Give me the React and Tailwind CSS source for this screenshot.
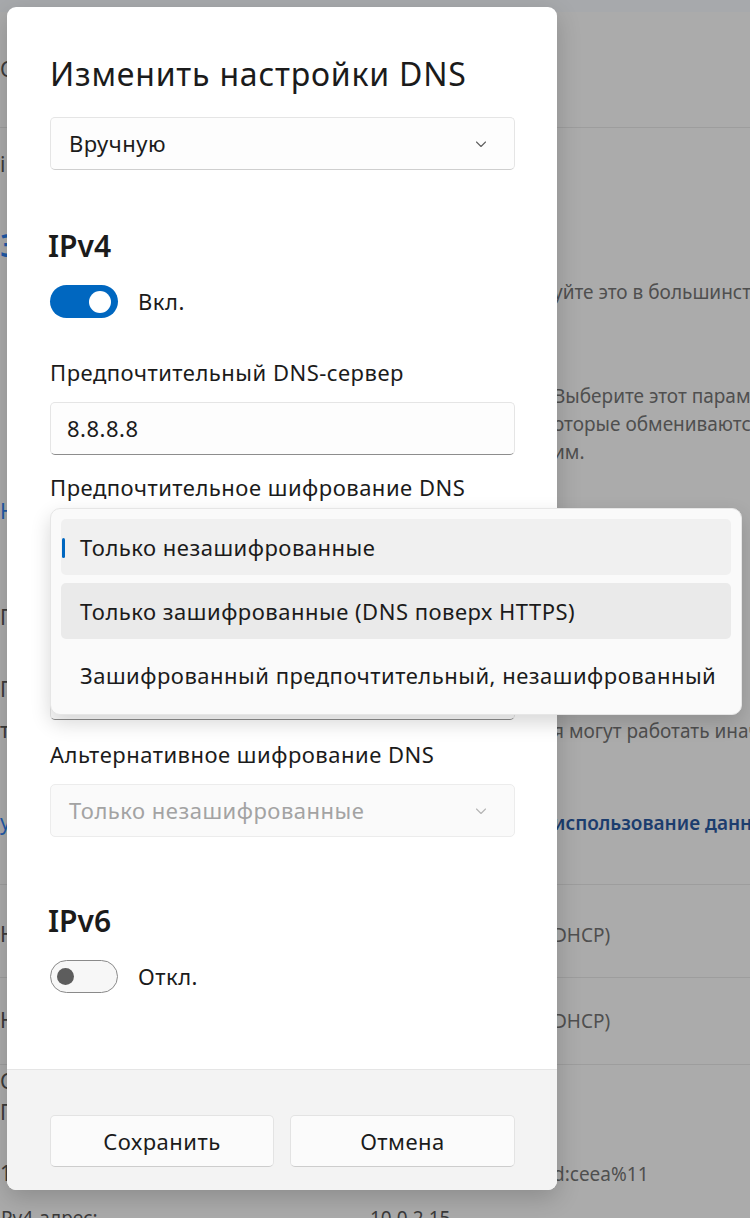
import React from "react";

const font = { fontFamily: '"Noto Sans", "Open Sans", sans-serif' };

const Chevron = ({ color = "#5f5f5f" }) => (
  <svg width="14" height="14" viewBox="0 0 14 14" fill="none">
    <path d="M2.5 5l4.5 4.5L11.5 5" stroke={color} strokeWidth="1.1" strokeLinecap="round" strokeLinejoin="round" />
  </svg>
);

const Toggle = ({ on }) =>
  on ? (
    <div className="flex h-[33px] w-[68px] items-center justify-end rounded-full bg-[#0067c0] pr-[7px]">
      <div className="h-[22px] w-[22px] rounded-full bg-white" />
    </div>
  ) : (
    <div className="flex h-[33px] w-[68px] items-center rounded-full border-[1.5px] border-[#8a8a8a] bg-[#f7f7f7] pl-[6px]">
      <div className="h-[17px] w-[17px] rounded-full bg-[#5d5d5d]" />
    </div>
  );

const Select = ({ value, disabled }) => (
  <div
    className={
      "flex h-[53px] w-[465px] items-center justify-between rounded-[5px] border pl-[18px] pr-[26px] text-[22px] tracking-[0.5px] " +
      (disabled
        ? "border-[#ececec] bg-[#fafafa] text-[#a3a3a3]"
        : "border-[#e5e5e5] border-b-[#cfcfcf] bg-[#fdfdfd] text-[#1b1b1b]")
    }
  >
    <span>{value}</span>
    <Chevron color={disabled ? "#b5b5b5" : "#5f5f5f"} />
  </div>
);

const Label = ({ children, className = "" }) => (
  <div className={"h-[28px] text-[22px] leading-[28px] tracking-[0.5px] text-[#1b1b1b] " + className}>{children}</div>
);

// one row of the dimmed settings page that lies behind the dialog
const BgRow = ({ h, left, right, line, rightClass = "text-[#4f4f4f]", leftClass = "text-[#3a3a3a]" }) => (
  <div className={"flex shrink-0 items-center " + (line ? "border-b border-[#9d9d9d]" : "")} style={{ height: h }}>
    <div className={"w-[7px] shrink-0 overflow-hidden whitespace-nowrap text-[21px] " + leftClass}>{left}</div>
    <div className="w-[546px] shrink-0" />
    <div className={"whitespace-nowrap text-[19px] " + rightClass}>{right}</div>
  </div>
);

export default function App() {
  return (
    <div className="relative h-[1218px] w-[750px] overflow-hidden bg-[#ababab]" style={font}>
      {/* dimmed settings page */}
      <div className="flex h-full flex-col">
        <div className="h-[12px] shrink-0 bg-[#a7a9ac]" />
        <BgRow h={116} left="С" line />
        <BgRow h={22} />
        <BgRow h={30} left="і" />
        <BgRow h={45} />
        <BgRow h={40} left="З" leftClass="text-[#1f5aa8] text-[32px] font-semibold" />
        <BgRow h={13} />
        <BgRow h={28} right="уйте это в большинстве" />
        <BgRow h={76} />
        <BgRow h={28} right="Выберите этот параметр" />
        <BgRow h={28} right="оторые обмениваются" />
        <BgRow h={28} right="им." />
        <BgRow h={32} />
        <BgRow h={28} left="Н" leftClass="text-[#1f5aa8]" />
        <BgRow h={78} />
        <BgRow h={28} left="П" />
        <BgRow h={44} />
        <BgRow h={28} left="П" />
        <BgRow h={13} />
        <BgRow h={28} left="т" right="я могут работать иначе" />
        <BgRow h={64} />
        <BgRow h={28} left="у" leftClass="text-[#1f5aa8]" right="использование данных" rightClass="font-semibold text-[#1c3d6e]" />
        <BgRow h={48} line />
        <BgRow h={36} />
        <BgRow h={28} left="Н" right="DHCP)" />
        <BgRow h={29} line />
        <BgRow h={29} />
        <BgRow h={28} left="Н" right="DHCP)" />
        <BgRow h={30} line />
        <BgRow h={34} left="С" />
        <BgRow h={28} left="П" />
        <BgRow h={33} />
        <BgRow h={28} left="1" right="d:ceea%11" />
        <div className="flex h-[40px] shrink-0 items-start whitespace-nowrap pt-[18px] text-[19px] leading-[24px] text-[#3a3a3a]">
          <span className="w-[370px] pl-[1px]">Pv4-адрес:</span>
          <span>10.0.2.15</span>
        </div>
      </div>

      {/* dialog */}
      <div className="absolute left-[7px] top-[7px] flex h-[1183px] w-[550px] flex-col overflow-hidden rounded-[9px] bg-white shadow-[0_8px_24px_rgba(0,0,0,0.18)]">
        <div className="flex flex-1 flex-col pl-[43px]">
          <div className="mt-[49px] h-[36px] text-[32px] leading-[36px] tracking-[0.8px] text-[#1b1b1b]">Изменить настройки DNS</div>
          <div className="mt-[25px]">
            <Select value="Вручную" />
          </div>

          <div className="-ml-[2px] mt-[58px] h-[36px] text-[30px] font-semibold leading-[36px] text-[#1b1b1b]">IPv4</div>
          <div className="mt-[21px] flex items-center gap-[20px]">
            <Toggle on />
            <span className="text-[22px] tracking-[0.5px] text-[#1b1b1b]">Вкл.</span>
          </div>

          <Label className="mt-[40px]">Предпочтительный DNS-сервер</Label>
          <div className="mt-[16px] flex h-[53px] w-[465px] items-center rounded-[5px] border border-[#e5e5e5] border-b-[#8d8d8d] bg-[#fdfdfd] pl-[16px] text-[22px] tracking-[0.5px] text-[#1b1b1b]">
            8.8.8.8
          </div>

          <Label className="mt-[18px]">Предпочтительное шифрование DNS</Label>
          {/* the fields below are covered by the open list */}
          <div className="mt-[16px]">
            <Select value="" />
          </div>
          <div className="mt-[53px] h-[28px]" />
          <div className="mt-[16px] h-[53px] w-[465px] rounded-[5px] border border-[#e5e5e5] border-b-[#8d8d8d] bg-[#fdfdfd]" />

          <Label className="mt-[20px]">Альтернативное шифрование DNS</Label>
          <div className="mt-[16px]">
            <Select value="Только незашифрованные" disabled />
          </div>

          <div className="-ml-[2px] mt-[66px] h-[36px] text-[30px] font-semibold leading-[36px] text-[#1b1b1b]">IPv6</div>
          <div className="mt-[21px] flex items-center gap-[20px]">
            <Toggle on={false} />
            <span className="text-[22px] tracking-[0.5px] text-[#1b1b1b]">Откл.</span>
          </div>
        </div>

        <div className="flex h-[121px] shrink-0 gap-[16px] border-t border-[#e5e5e5] bg-[#f3f3f3] pl-[43px] pt-[45px]">
          <button className="h-[52px] w-[224px] rounded-[5px] border border-[#e3e3e3] border-b-[#cdcdcd] bg-[#fbfbfb] text-[22px] tracking-[0.5px] text-[#1b1b1b]">
            Сохранить
          </button>
          <button className="h-[52px] w-[225px] rounded-[5px] border border-[#e3e3e3] border-b-[#cdcdcd] bg-[#fbfbfb] text-[22px] tracking-[0.5px] text-[#1b1b1b]">
            Отмена
          </button>
        </div>
      </div>

      {/* open dropdown list */}
      <div className="absolute left-[50px] top-[508px] flex w-[692px] flex-col gap-[8px] rounded-[10px] border border-[#e6e6e6] bg-[#fafafa] p-[10px] pb-[11px] text-[22px] tracking-[0.5px] text-[#1b1b1b] shadow-[0_8px_20px_rgba(0,0,0,0.16)]">
        <div className="relative flex h-[56px] items-center rounded-[5px] bg-[#f0f0f0] pl-[19px]">
          <div className="absolute left-[1px] top-[19px] h-[20px] w-[3px] rounded-full bg-[#0067c0]" />
          Только незашифрованные
        </div>
        <div className="flex h-[56px] items-center rounded-[5px] bg-[#eaeaea] pl-[19px]">
          Только зашифрованные (DNS поверх HTTPS)
        </div>
        <div className="flex h-[56px] items-center rounded-[5px] pl-[19px]">
          Зашифрованный предпочтительный, незашифрованный
        </div>
      </div>
    </div>
  );
}
